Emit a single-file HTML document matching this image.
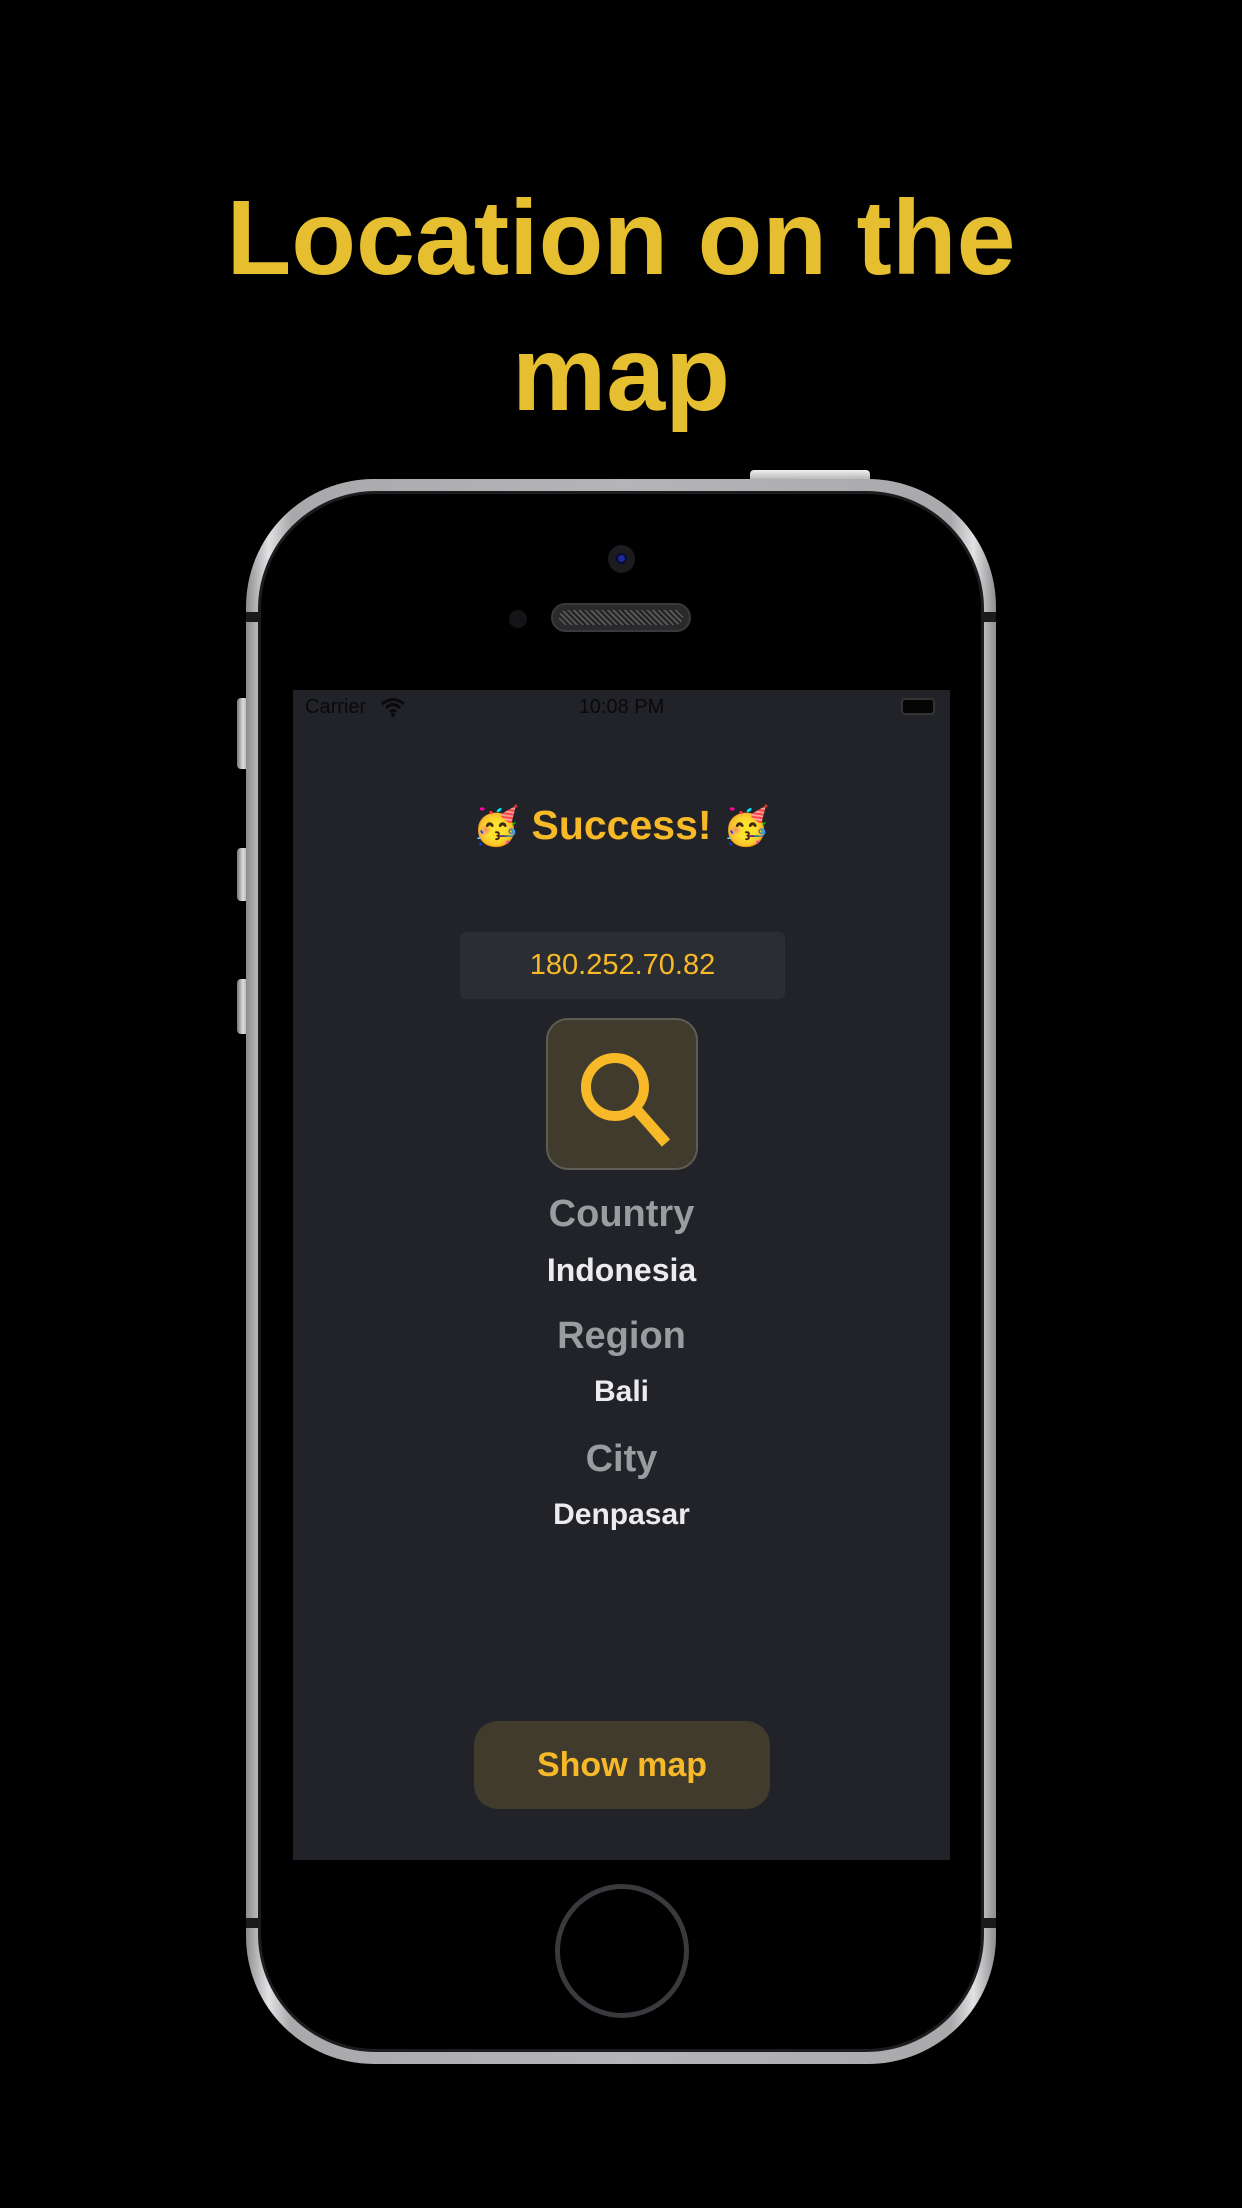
<!DOCTYPE html>
<html><head><meta charset="utf-8"><style>
*{margin:0;padding:0;box-sizing:border-box}
body{width:1242px;height:2208px;background:#000;position:relative;overflow:hidden;font-family:"Liberation Sans",Arial,sans-serif}
.abs{position:absolute}
.title{left:0;width:1242px;text-align:center;color:#e5bf2f;font-weight:bold;font-size:106px;line-height:136px;top:170px}
.phone{left:246px;top:479px;width:750px;height:1585px;border-radius:128px;background:linear-gradient(90deg,#8d8d90,#e2e2e4 3%,#a9a9ac 6%,#b5b5b8 50%,#a9a9ac 94%,#e2e2e4 97%,#8d8d90)}
.inner{left:12px;top:12px;right:12px;bottom:12px;border-radius:118px;background:#000;border:3px solid #1c1c1e}
.screen{left:293px;top:690px;width:657px;height:1170px;background:#212328}
.c{left:293px;width:657px;text-align:center}
</style></head><body>
<div class="abs title">Location on the<br>map</div>
<div class="abs" style="left:750px;top:470px;width:120px;height:14px;border-radius:4px 4px 0 0;background:linear-gradient(#f0f0f0,#9a9a9a)"></div>
<div class="abs" style="left:237px;top:698px;width:12px;height:71px;border-radius:4px 0 0 4px;background:linear-gradient(90deg,#777,#ddd,#999)"></div>
<div class="abs" style="left:237px;top:848px;width:12px;height:53px;border-radius:4px 0 0 4px;background:linear-gradient(90deg,#777,#ddd,#999)"></div>
<div class="abs" style="left:237px;top:979px;width:12px;height:55px;border-radius:4px 0 0 4px;background:linear-gradient(90deg,#777,#ddd,#999)"></div>
<div class="abs phone"><div class="abs inner"></div></div>
<div class="abs" style="left:246px;top:612px;width:14px;height:10px;background:#1a1a1c"></div>
<div class="abs" style="left:982px;top:612px;width:14px;height:10px;background:#1a1a1c"></div>
<div class="abs" style="left:246px;top:1918px;width:14px;height:10px;background:#1a1a1c"></div>
<div class="abs" style="left:982px;top:1918px;width:14px;height:10px;background:#1a1a1c"></div>
<div class="abs" style="left:608px;top:545px;width:27px;height:28px;border-radius:50%;background:#1c1c20"><div class="abs" style="left:8px;top:8px;width:11px;height:11px;border-radius:50%;background:#1c2a9a;border:2px solid #0a0a30"></div></div>
<div class="abs" style="left:509px;top:610px;width:18px;height:18px;border-radius:50%;background:#141416"></div>
<div class="abs" style="left:551px;top:603px;width:140px;height:29px;border-radius:15px;background:#2a2a2c;border:2px solid #3a3a3c"><div class="abs" style="left:6px;top:5px;right:6px;bottom:5px;border-radius:9px;background:repeating-linear-gradient(45deg,#555 0 2px,#222 2px 4px)"></div></div>
<div class="abs screen"></div>
<div class="abs" style="left:305px;top:696px;font-size:20px;color:#0a0a0c">Carrier</div>
<svg class="abs" style="left:380px;top:697px" width="26" height="20" viewBox="0 0 26 20"><path d="M2 7Q13-2 24 7M6 11Q13 4 20 11M10 15Q13 12 16 15" stroke="#0a0a0c" stroke-width="3" fill="none"/><circle cx="13" cy="18" r="2" fill="#0a0a0c"/></svg>
<div class="abs c" style="top:696px;font-size:20px;color:#0a0a0c">10:08 PM</div>
<div class="abs" style="left:901px;top:698px;width:34px;height:17px;border-radius:4px;border:2px solid #333;background:#050505"></div>
<div class="abs c" style="top:800px;font-size:41px;font-weight:bold;color:#f7b928;line-height:50px"><span style="font-size:38px">🥳</span> Success! <span style="font-size:38px">🥳</span></div>
<div class="abs" style="left:460px;top:932px;width:325px;height:67px;border-radius:6px;background:#2a2e33;color:#f7b928;font-size:29px;text-align:center;line-height:67px">180.252.70.82</div>
<div class="abs" style="left:546px;top:1018px;width:152px;height:152px;border-radius:22px;background:#403b2d;border:2px solid #5f5c55"></div>
<svg class="abs" style="left:546px;top:1018px" width="152" height="152" viewBox="0 0 152 152"><circle cx="69" cy="69" r="29" stroke="#f7b928" stroke-width="10" fill="none"/><path d="M90 91L120 125" stroke="#f7b928" stroke-width="11"/></svg>
<div class="abs c" style="top:1190px;font-size:38px;font-weight:bold;color:#9b9ca0;line-height:48px">Country</div>
<div class="abs c" style="top:1250px;font-size:32px;font-weight:bold;color:#ececee;line-height:40px">Indonesia</div>
<div class="abs c" style="top:1312px;font-size:38px;font-weight:bold;color:#9b9ca0;line-height:48px">Region</div>
<div class="abs c" style="top:1372px;font-size:30px;font-weight:bold;color:#ececee;line-height:40px">Bali</div>
<div class="abs c" style="top:1435px;font-size:38px;font-weight:bold;color:#9b9ca0;line-height:48px">City</div>
<div class="abs c" style="top:1495px;font-size:30px;font-weight:bold;color:#ececee;line-height:40px">Denpasar</div>
<div class="abs" style="left:474px;top:1721px;width:296px;height:88px;border-radius:24px;background:#403b2d;color:#f7b928;font-size:34px;font-weight:bold;text-align:center;line-height:88px">Show map</div>
<div class="abs" style="left:555px;top:1884px;width:134px;height:134px;border-radius:50%;border:5px solid #3a3a3e;background:#000"></div>
</body></html>
